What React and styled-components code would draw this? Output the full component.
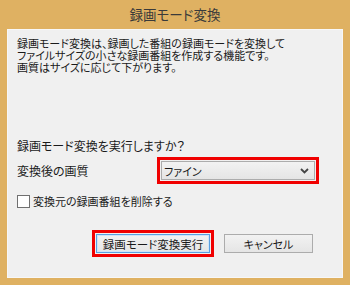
import React from "react";
import styled, { createGlobalStyle } from "styled-components";

const GlobalStyle = createGlobalStyle`
  html, body { margin: 0; padding: 0; }
  body {
    font-family: "Noto Sans CJK JP", "Noto Sans", sans-serif;
    font-feature-settings: "palt";
    color: #1a1a1a;
  }
`;

const ChevronDown = () => (
  <svg width="9" height="6" viewBox="0 0 9 6">
    <path d="M1 1 L4.5 4.5 L8 1" fill="none" stroke="#444" strokeWidth="1.8" />
  </svg>
);

const App = () => {
  return (
    <React.Fragment>
      <GlobalStyle />
      <Window>
        <TitleBar>録画モード変換</TitleBar>
        <Client>
          <Description>
            録画モード変換は、録画した番組の録画モードを変換して
            <br />
            ファイルサイズの小さな録画番組を作成する機能です。
            <br />
            画質はサイズに応じて下がります。
          </Description>
          <Question>録画モード変換を実行しますか？</Question>
          <QualityRow>
            <Label>変換後の画質</Label>
            <Highlight>
              <Dropdown>
                <span>ファイン</span>
                <ChevronDown />
              </Dropdown>
            </Highlight>
          </QualityRow>
          <CheckRow>
            <CheckBox />
            <span>変換元の録画番組を削除する</span>
          </CheckRow>
          <ButtonRow>
            <Highlight>
              <Button primary width={114} size={11.5}>録画モード変換実行</Button>
            </Highlight>
            <Button width={89} size={11}>キャンセル</Button>
          </ButtonRow>
        </Client>
      </Window>
    </React.Fragment>
  );
};

const Window = styled.div`
width:350px;
height:285px;
display:flex;
flex-direction:column;
background:#dfb162;
padding:0 7px 7px 7px;
box-sizing:border-box;
`

const TitleBar = styled.div`
height:29px;
display:flex;
justify-content:center;
align-items:center;
font-size:13.5px;
color:#3a3a3a;
padding-bottom:1px;
box-sizing:border-box;
`

const Client = styled.div`
flex:1;
background:#f0f0f0;
border:1px solid #f7f7f7;
padding:7px 9px 0 9px;
display:flex;
flex-direction:column;
box-sizing:border-box;
font-size:12px;
`

const Description = styled.div`
font-size:11px;
line-height:12px;
`

const Question = styled.div`
margin-top:66px;
line-height:14px;
`

const QualityRow = styled.div`
margin-top:4px;
display:flex;
align-items:center;
`

const Label = styled.div`
width:140px;
`

const Highlight = styled.div`
border:3px solid #f00000;
padding:1px;
display:flex;
`

const Dropdown = styled.div`
width:154px;
height:19px;
box-sizing:border-box;
border:1px solid #acacac;
background:linear-gradient(#f2f2f2, #e5e5e5);
display:flex;
align-items:center;
justify-content:space-between;
padding:0 5px 0 2px;
font-size:11px;
`

const CheckRow = styled.div`
margin-top:10px;
display:flex;
align-items:center;
gap:3px;
height:14px;
font-size:11px;
`

const CheckBox = styled.div`
width:13px;
height:13px;
box-sizing:border-box;
border:1px solid #707070;
background:#fff;
`

const ButtonRow = styled.div`
margin-top:22px;
padding-left:75px;
display:flex;
align-items:center;
gap:10px;
`

const Button = styled.div`
width:${(props) => props.width}px;
height:19px;
box-sizing:border-box;
display:flex;
justify-content:center;
align-items:center;
border:1px solid ${(props) => (props.primary ? "#5a9fe0" : "#acacac")};
box-shadow:${(props) => (props.primary ? "inset 0 0 0 1px #cfe4f8" : "none")};
background:linear-gradient(#f2f2f2, #e5e5e5);
font-size:${(props) => props.size}px;
`

export default App;
